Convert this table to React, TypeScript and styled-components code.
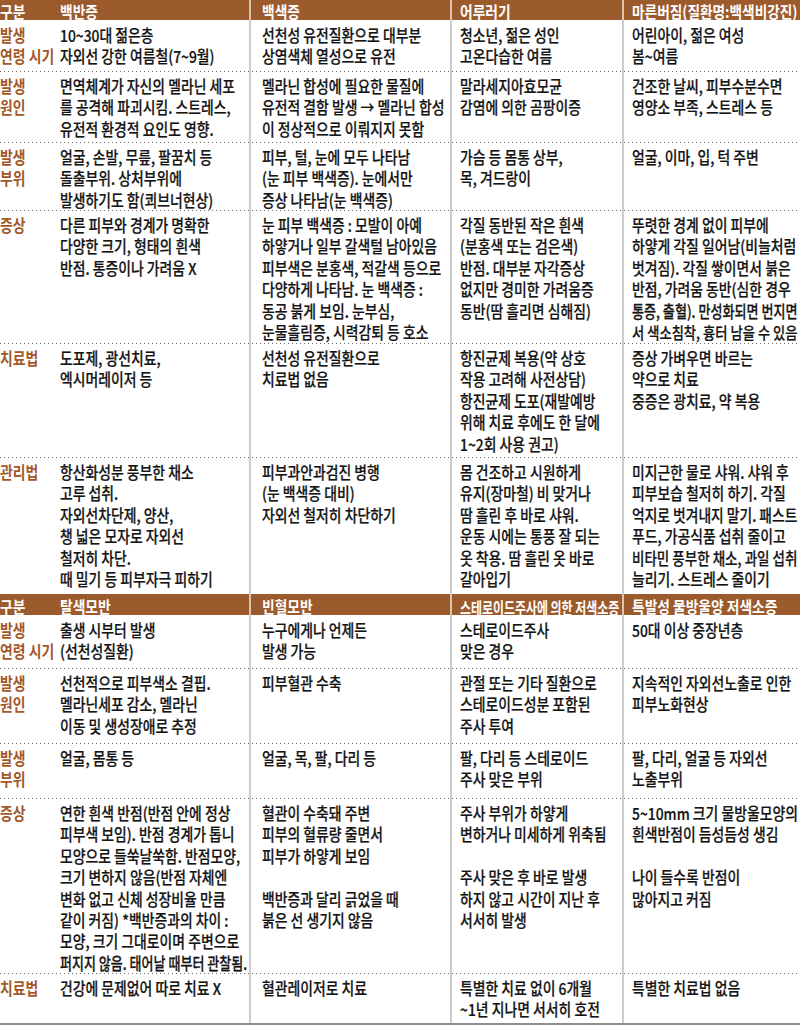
import React, { useLayoutEffect, useRef, useState } from "react";
import styled, { createGlobalStyle } from "styled-components";

const GlobalStyle = createGlobalStyle`
  html, body { margin: 0; padding: 0; background: #ffffff; }
  body {
    font-family: "Noto Sans CJK KR", "Noto Sans", sans-serif;
    color: #141414;
  }
`;

const COLS = "249px 201px 172px 178px";
const LINE = 21.4;
const BODY_FS = 16.5;
const HEAD_FS = 16;

const Table = styled.div`
  width: 800px;
  display: flex;
  flex-direction: column;
  border-bottom: 2px solid #8e8e8e;
`;

const HeaderRow = styled.div<{ $h: number }>`
  display: grid;
  grid-template-columns: ${COLS};
  height: ${(p) => p.$h}px;
  background: #9c5b2d;
`;

const HeaderCell = styled.div<{ $pad: number; $first?: boolean }>`
  display: flex;
  align-items: center;
  min-width: 0;
  padding: 0 2px 0 ${(p) => p.$pad}px;
  border-left: ${(p) => (p.$first ? "none" : "2px solid #dcc4ae")};
  color: #ffffff;
  font-weight: 700;
  line-height: 20px;
`;

const HeaderLabel = styled.div`
  width: 60px;
  flex: none;
`;

const HeaderText = styled.div`
  flex: 1;
  min-width: 0;
`;

const Row = styled.div<{ $h: number; $dotted?: boolean }>`
  display: grid;
  grid-template-columns: ${COLS};
  height: ${(p) => p.$h}px;
  background-image: ${(p) =>
    p.$dotted
      ? "linear-gradient(to right, #6c6c6c 1px, transparent 1px)"
      : "none"};
  background-size: 4px 1px;
  background-repeat: repeat-x;
  background-position: 0 0;
`;

const Cell = styled.div<{ $pad: number; $first?: boolean }>`
  display: flex;
  min-width: 0;
  padding: 4px 2px 0 ${(p) => p.$pad}px;
  border-left: ${(p) => (p.$first ? "none" : "2px solid #cdcdcd")};
`;

const Label = styled.div`
  width: 60px;
  flex: none;
  color: #a3582a;
  font-weight: 700;
  line-height: ${LINE}px;
  padding-right: 2px;
  box-sizing: border-box;
`;

const Text = styled.div`
  flex: 1;
  min-width: 0;
  font-weight: 500;
  line-height: ${LINE}px;
  -webkit-text-stroke: 0.2px #141414;
`;

const LineBox = styled.div<{ $lh: number }>`
  height: ${(p) => p.$lh}px;
  white-space: nowrap;
`;

const LineInk = styled.span`
  display: inline-block;
  transform-origin: left center;
`;

/* A line set in a condensed way: the font is set smaller so that its width
   fits the column, and stretched back vertically to the full type size. */
function FitLine({ text, base, lh, fs }: { text: string; base: number; lh: number; fs: number }) {
  const ref = useRef<HTMLSpanElement>(null);
  const cur = useRef(base);
  const [scale, setScale] = useState(base);
  useLayoutEffect(() => {
    const measure = () => {
      const el = ref.current;
      if (!el || !el.parentElement) return;
      const avail = el.parentElement.clientWidth;
      const natural = el.offsetWidth / cur.current;
      if (natural > 0) {
        const s = Math.min(base, (avail - 0.5) / natural);
        cur.current = s;
        setScale(s);
      }
    };
    measure();
    if ((document as any).fonts?.ready) (document as any).fonts.ready.then(measure);
  }, [text, base]);
  return (
    <LineBox $lh={lh}>
      <LineInk
        ref={ref}
        style={{ fontSize: `${fs * scale}px`, transform: `scaleY(${1 / scale})` }}
      >
        {text || "\u00a0"}
      </LineInk>
    </LineBox>
  );
}

function Lines({
  lines,
  base = 0.84,
  lh = LINE,
  fs = BODY_FS,
}: {
  lines: string[];
  base?: number;
  lh?: number;
  fs?: number;
}) {
  return (
    <>
      {lines.map((t, i) => (
        <FitLine key={i} text={t} base={base} lh={lh} fs={fs} />
      ))}
    </>
  );
}

type RowData = { h: number; label: string[]; cells: string[][] };
type Section = { header: string[]; rows: RowData[] };

const sections: Section[] = [
  {
    header: ["구분", "백반증", "백색증", "어루러기", "마른버짐(질환명:백색비강진)"],
    rows: [
      {
        h: 51,
        label: ["발생", "연령 시기"],
        cells: [
          ["10~30대 젊은층", "자외선 강한 여름철(7~9월)"],
          ["선천성 유전질환으로 대부분", "상염색체 열성으로 유전"],
          ["청소년, 젊은 성인", "고온다습한 여름"],
          ["어린아이, 젊은 여성", "봄~여름"],
        ],
      },
      {
        h: 71,
        label: ["발생", "원인"],
        cells: [
          ["면역체계가 자신의 멜라닌 세포", "를 공격해 파괴시킴. 스트레스,", "유전적 환경적 요인도 영향."],
          ["멜라닌 합성에 필요한 물질에", "유전적 결함 발생 → 멜라닌 합성", "이 정상적으로 이뤄지지 못함"],
          ["말라세지아효모균", "감염에 의한 곰팡이증"],
          ["건조한 날씨, 피부수분수면", "영양소 부족, 스트레스 등"],
        ],
      },
      {
        h: 68,
        label: ["발생", "부위"],
        cells: [
          ["얼굴, 손발, 무릎, 팔꿈치 등", "돌출부위. 상처부위에", "발생하기도 함(쾨브너현상)"],
          ["피부, 털, 눈에 모두 나타남", "(눈 피부 백색증). 눈에서만", "증상 나타남(눈 백색증)"],
          ["가슴 등 몸통 상부,", "목, 겨드랑이"],
          ["얼굴, 이마, 입, 턱 주변"],
        ],
      },
      {
        h: 133,
        label: ["증상"],
        cells: [
          ["다른 피부와 경계가 명확한", "다양한 크기, 형태의 흰색", "반점. 통증이나 가려움 X"],
          [
            "눈 피부 백색증 : 모발이 아예",
            "하얗거나 일부 갈색털 남아있음",
            "피부색은 분홍색, 적갈색 등으로",
            "다양하게 나타남. 눈 백색증 :",
            "동공 붉게 보임. 눈부심,",
            "눈물흘림증, 시력감퇴 등 호소",
          ],
          ["각질 동반된 작은 흰색", "(분홍색 또는 검은색)", "반점. 대부분 자각증상", "없지만 경미한 가려움증", "동반(땀 흘리면 심해짐)"],
          [
            "뚜렷한 경계 없이 피부에",
            "하얗게 각질 일어남(비늘처럼",
            "벗겨짐). 각질 쌓이면서 붉은",
            "반점, 가려움 동반(심한 경우",
            "통증, 출혈). 만성화되면 번지면",
            "서 색소침착, 흉터 남을 수 있음",
          ],
        ],
      },
      {
        h: 114,
        label: ["치료법"],
        cells: [
          ["도포제, 광선치료,", "엑시머레이저 등"],
          ["선천성 유전질환으로", "치료법 없음"],
          ["항진균제 복용(약 상호", "작용 고려해 사전상담)", "항진균제 도포(재발예방", "위해 치료 후에도 한 달에", "1~2회 사용 권고)"],
          ["증상 가벼우면 바르는", "약으로 치료", "중증은 광치료, 약 복용"],
        ],
      },
      {
        h: 137,
        label: ["관리법"],
        cells: [
          ["항산화성분 풍부한 채소", "고루 섭취.", "자외선차단제, 양산,", "챙 넓은 모자로 자외선", "철저히 차단.", "때 밀기 등 피부자극 피하기"],
          ["피부과안과검진 병행", "(눈 백색증 대비)", "자외선 철저히 차단하기"],
          ["몸 건조하고 시원하게", "유지(장마철) 비 맞거나", "땀 흘린 후 바로 샤워.", "운동 시에는 통풍 잘 되는", "옷 착용.  땀 흘린 옷 바로", "갈아입기"],
          [
            "미지근한 물로 샤워. 샤워 후",
            "피부보습 철저히 하기. 각질",
            "억지로 벗겨내지 말기. 패스트",
            "푸드, 가공식품 섭취 줄이고",
            "비타민 풍부한 채소, 과일 섭취",
            "늘리기. 스트레스 줄이기",
          ],
        ],
      },
    ],
  },
  {
    header: ["구분", "탈색모반", "빈혈모반", "스테로이드주사에 의한 저색소증", "특발성 물방울양 저색소증"],
    rows: [
      {
        h: 53,
        label: ["발생", "연령 시기"],
        cells: [
          ["출생 시부터 발생", "(선천성질환)"],
          ["누구에게나 언제든", "발생 가능"],
          ["스테로이드주사", "맞은 경우"],
          ["50대 이상 중장년층"],
        ],
      },
      {
        h: 75,
        label: ["발생", "원인"],
        cells: [
          ["선천적으로 피부색소 결핍.", "멜라닌세포 감소, 멜라닌", "이동 및 생성장애로 추정"],
          ["피부혈관 수축"],
          ["관절 또는 기타 질환으로", "스테로이드성분 포함된", "주사 투여"],
          ["지속적인 자외선노출로 인한", "피부노화현상"],
        ],
      },
      {
        h: 55,
        label: ["발생", "부위"],
        cells: [
          ["얼굴, 몸통 등"],
          ["얼굴, 목, 팔, 다리 등"],
          ["팔, 다리 등 스테로이드", "주사 맞은 부위"],
          ["팔, 다리, 얼굴 등 자외선", "노출부위"],
        ],
      },
      {
        h: 175,
        label: ["증상"],
        cells: [
          [
            "연한 흰색 반점(반점 안에 정상",
            "피부색 보임). 반점 경계가 톱니",
            "모양으로 들쑥날쑥함. 반점모양,",
            "크기 변하지 않음(반점 자체엔",
            "변화 없고 신체 성장비율 만큼",
            "같이 커짐) *백반증과의 차이 :",
            "모양, 크기 그대로이며 주변으로",
            "퍼지지 않음. 태어날 때부터 관찰됨.",
          ],
          ["혈관이 수축돼 주변", "피부의 혈류량 줄면서", "피부가 하얗게 보임", "", "백반증과 달리 긁었을 때", "붉은 선 생기지 않음"],
          ["주사 부위가 하얗게", "변하거나 미세하게 위축됨", "", "주사 맞은 후 바로 발생", "하지 않고 시간이 지난 후", "서서히 발생"],
          ["5~10mm 크기 물방울모양의", "흰색반점이 듬성듬성 생김", "", "나이 들수록 반점이", "많아지고  커짐"],
        ],
      },
      {
        h: 50,
        label: ["치료법"],
        cells: [
          ["건강에 문제없어 따로 치료 X"],
          ["혈관레이저로 치료"],
          ["특별한 치료 없이 6개월", "~1년 지나면 서서히 호전"],
          ["특별한 치료법 없음"],
        ],
      },
    ],
  },
];

const PADS = [0, 11, 8, 8];
const HEADER_H = [20, 21];

export default function App() {
  return (
    <>
      <GlobalStyle />
      <Table>
        {sections.map((sec, si) => (
          <React.Fragment key={si}>
            <HeaderRow $h={HEADER_H[si]}>
              <HeaderCell $pad={0} $first>
                <HeaderLabel>
                  <Lines lines={[sec.header[0]]} base={0.86} lh={20} fs={HEAD_FS} />
                </HeaderLabel>
                <HeaderText>
                  <Lines lines={[sec.header[1]]} base={0.86} lh={20} fs={HEAD_FS} />
                </HeaderText>
              </HeaderCell>
              {sec.header.slice(2).map((h, i) => (
                <HeaderCell key={i} $pad={PADS[i + 1]}>
                  <HeaderText>
                    <Lines lines={[h]} base={0.86} lh={20} fs={HEAD_FS} />
                  </HeaderText>
                </HeaderCell>
              ))}
            </HeaderRow>
            {sec.rows.map((r, ri) => (
              <Row key={ri} $h={r.h} $dotted={ri > 0}>
                <Cell $pad={0} $first>
                  <Label>
                    <Lines lines={r.label} base={0.84} />
                  </Label>
                  <Text>
                    <Lines lines={r.cells[0]} />
                  </Text>
                </Cell>
                {r.cells.slice(1).map((c, ci) => (
                  <Cell key={ci} $pad={PADS[ci + 1]}>
                    <Text>
                      <Lines lines={c} />
                    </Text>
                  </Cell>
                ))}
              </Row>
            ))}
          </React.Fragment>
        ))}
      </Table>
    </>
  );
}
